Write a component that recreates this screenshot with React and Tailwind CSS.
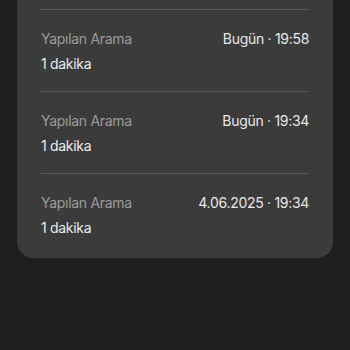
import React from 'react';

const calls = [
  { type: 'Yapılan Arama', when: 'Bugün · 19:58', duration: '1 dakika' },
  { type: 'Yapılan Arama', when: 'Bugün · 19:34', duration: '1 dakika' },
  { type: 'Yapılan Arama', when: '4.06.2025 · 19:34', duration: '1 dakika' },
];

export default function App() {
  return (
    <div
      className="w-[350px] h-[350px] overflow-hidden bg-[#1e1e1e] px-[17px]"
      style={{ fontFamily: 'Inter, "Noto Sans", sans-serif' }}
    >
      <div className="bg-[#3b3b3b] rounded-b-[16px] pt-[9px] px-6">
        {calls.map((call, i) => (
          <div key={i} className="border-t border-[#5a5a5a] pt-[19px] pb-[17px] last:pb-[20px]">
            <div className="flex justify-between text-[14px] leading-[20px] tracking-[-0.3px]">
              <span className="text-[#9b9b9b]">{call.type}</span>
              <span className="text-[#e8e8e8]">{call.when}</span>
            </div>
            <div className="mt-[5px] text-[14px] leading-[20px] tracking-[-0.3px] text-[#ececec]">{call.duration}</div>
          </div>
        ))}
      </div>
    </div>
  );
}
